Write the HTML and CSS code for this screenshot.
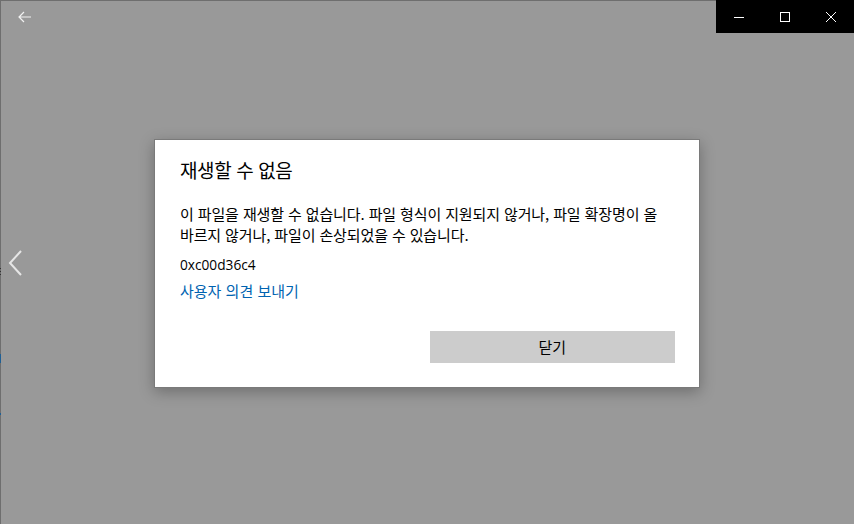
FILE: index.html
```html
<!DOCTYPE html>
<html lang="ko">
<head>
  <meta charset="UTF-8">
  <meta name="viewport" content="width=device-width, initial-scale=1.0">
  <title>재생할 수 없음</title>
  <link rel="stylesheet" href="styles.css">
</head>
<body>
  <div class="app">
    <div class="titlebar">
      <div class="back-button">
        <svg width="14" height="12" viewBox="0 0 14 12">
          <path d="M6 1 L1 6 L6 11 M1 6 H13" fill="none" stroke="#f2f2f2" stroke-width="1.2"/>
        </svg>
      </div>
      <div class="caption">
        <div class="caption-btn">
          <svg width="10" height="10" viewBox="0 0 10 10"><path d="M0 5.5 H10" stroke="#fff" stroke-width="1"/></svg>
        </div>
        <div class="caption-btn">
          <svg width="10" height="10" viewBox="0 0 10 10"><rect x="0.5" y="0.5" width="9" height="9" fill="none" stroke="#fff" stroke-width="1"/></svg>
        </div>
        <div class="caption-btn">
          <svg width="10" height="10" viewBox="0 0 10 10"><path d="M0 0 L10 10 M10 0 L0 10" stroke="#fff" stroke-width="1"/></svg>
        </div>
      </div>
    </div>

    <div class="flip-prev">
      <svg width="14" height="26" viewBox="0 0 14 26">
        <path d="M13 1 L2 13 L13 25" fill="none" stroke="#e6e6e6" stroke-width="2"/>
      </svg>
    </div>
    <div class="edge-marks">
      <span class="mark dark"></span>
      <span class="mark blue"></span>
      <span class="mark blue short"></span>
    </div>

    <div class="dialog">
      <h1 class="dialog-title">재생할 수 없음</h1>
      <p class="dialog-text">이 파일을 재생할 수 없습니다. 파일 형식이 지원되지 않거나, 파일 확장명이 올<br>바르지 않거나, 파일이 손상되었을 수 있습니다.</p>
      <p class="error-code">0xc00d36c4</p>
      <a class="feedback-link" href="#">사용자 의견 보내기</a>
      <div class="dialog-buttons">
        <span></span>
        <button class="btn-close">닫기</button>
      </div>
    </div>
  </div>
</body>
</html>
```

FILE: styles.css
```css
* {
  box-sizing: border-box;
}
body {
  margin: 0;
  font-family: "Noto Sans CJK KR", "Noto Sans", sans-serif;
  background-color: #999999;
}
.app {
  position: relative;
  width: 854px;
  height: 524px;
  box-shadow: inset 1px 1px 0 #6e6e6e;
  display: flex;
  align-items: center;
  justify-content: center;
}
.titlebar {
  position: absolute;
  top: 0;
  left: 0;
  right: 0;
  height: 32px;
  display: flex;
  justify-content: space-between;
}
.back-button {
  width: 50px;
  display: flex;
  align-items: center;
  justify-content: center;
  padding-top: 1px;
}
.caption {
  display: flex;
  background-color: #000;
  height: 33px;
}
.caption-btn {
  width: 46px;
  display: flex;
  align-items: center;
  justify-content: center;
}
.flip-prev {
  position: absolute;
  left: 8px;
  top: 250px;
}
.edge-marks {
  position: absolute;
  left: -1px;
  top: 268px;
  display: flex;
  flex-direction: column;
}
.mark {
  display: block;
  width: 2px;
}
.mark.dark {
  height: 8px;
  background: repeating-linear-gradient(#333 0 1px, transparent 1px 3px);
}
.mark.blue {
  height: 9px;
  margin-top: 78px;
  background-color: #1f5f94;
}
.mark.short {
  height: 2px;
  margin-top: 50px;
}
.dialog {
  width: 546px;
  background-color: #fff;
  border: 1px solid #7a7a7a;
  box-shadow: 0 4px 14px rgba(0, 0, 0, 0.28);
  padding: 16px 24px 24px 25px;
  margin-top: 2px;
}
.dialog-title {
  margin: 0 0 19px;
  font-size: 19px;
  font-weight: normal;
  line-height: 28px;
  letter-spacing: -0.4px;
  color: #000;
}
.dialog-text {
  margin: 0 0 9px;
  font-size: 15px;
  line-height: 21px;
  letter-spacing: -0.12px;
  white-space: nowrap;
  color: #000;
}
.error-code {
  margin: 0 0 5px;
  font-family: "Open Sans", sans-serif;
  font-size: 13.7px;
  line-height: 21px;
  color: #000;
}
.feedback-link {
  display: block;
  font-size: 15px;
  line-height: 21px;
  color: #0063b1;
  text-decoration: none;
}
.dialog-buttons {
  display: grid;
  grid-template-columns: 1fr 1fr;
  gap: 4px;
  margin-top: 30px;
}
.btn-close {
  height: 32px;
  border: none;
  background-color: #cccccc;
  font-family: inherit;
  font-size: 15px;
  color: #000;
}
```
